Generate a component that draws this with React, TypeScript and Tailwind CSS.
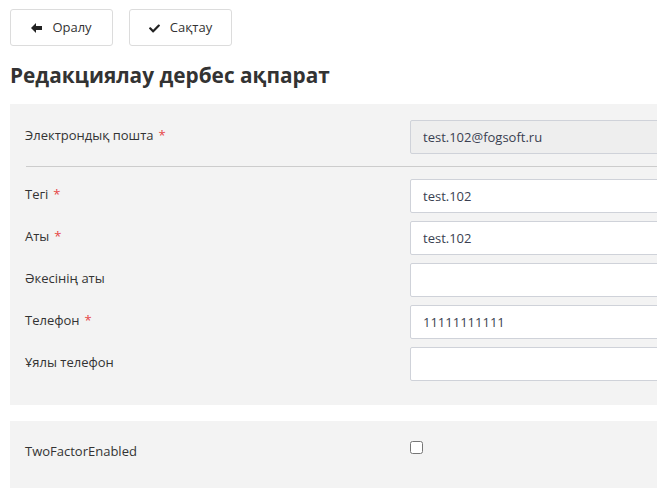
import { FaCheck } from "react-icons/fa";

const ArrowLeft = () => (
  <svg width="11" height="10" viewBox="0 0 11 10" className="shrink-0">
    <polygon points="0,5 5,0 5,10" fill="#222" />
    <rect x="4.5" y="3" width="6.5" height="4" fill="#222" />
  </svg>
);

const Req = () => <span className="ml-[5px] text-[#e64545]">*</span>;

type Field = { label: string; value: string; required?: boolean };

const fields: Field[] = [
  { label: "Тегі", value: "test.102", required: true },
  { label: "Аты", value: "test.102", required: true },
  { label: "Әкесінің аты", value: "" },
  { label: "Телефон", value: "11111111111", required: true },
  { label: "Ұялы телефон", value: "" },
];

export default function App() {
  return (
    <div className="w-[657px] h-[495px] overflow-hidden bg-white font-['Open_Sans',sans-serif] text-[13px] text-[#333]">
      <div className="w-[900px] pl-[10px]">
        {/* Toolbar */}
        <div className="flex gap-4 pt-[9px]">
          <button className="flex h-[37px] w-[103px] items-center justify-center gap-[10px] rounded-[3px] border border-[#dcdcdc] bg-white pt-px text-[13px] text-[#333]">
            <ArrowLeft />
            <span>Оралу</span>
          </button>
          <button className="flex h-[37px] w-[103px] items-center justify-center gap-[10px] rounded-[3px] border border-[#dcdcdc] bg-white pt-px text-[13px] text-[#333]">
            <FaCheck className="h-[11px] w-[11px] text-[#222]" />
            <span>Сақтау</span>
          </button>
        </div>

        <h1 className="mt-[17px] mb-[17px] text-[20.8px] font-bold leading-[24px] text-[#333]">
          Редакциялау дербес ақпарат
        </h1>

        {/* Main panel */}
        <div className="bg-[#f3f3f3] px-[15px] pt-[16px] pb-[24px]">
          <div className="grid grid-cols-[385px_1fr]">
            <label className="pt-[6px] leading-[18px]">
              Электрондық пошта
              <Req />
            </label>
            <input
              disabled
              value="test.102@fogsoft.ru"
              readOnly
              className="h-[34px] w-full rounded-[2px] border border-[#cfd2d9] bg-[#eeeeee] px-[12px] text-[13px] text-[#3a3f51] outline-none"
            />
          </div>

          <div className="mt-[12px] ml-[1px] h-px bg-[#cccccc]" />

          <div className="mt-[12px] flex flex-col gap-[8px]">
            {fields.map((f) => (
              <div key={f.label} className="grid grid-cols-[385px_1fr]">
                <label className="pt-[6px] leading-[18px]">
                  {f.label}
                  {f.required && <Req />}
                </label>
                <input
                  value={f.value}
                  readOnly
                  className="h-[34px] w-full rounded-[2px] border border-[#cfd2d9] bg-white px-[12px] text-[13px] text-[#3a3f51] outline-none"
                />
              </div>
            ))}
          </div>
        </div>

        {/* Two factor panel */}
        <div className="mt-[16px] h-[67px] bg-[#f3f3f3] px-[15px] pt-[20px]">
          <div className="grid grid-cols-[385px_1fr]">
            <label className="pt-[1px] leading-[18px]">TwoFactorEnabled</label>
            <div>
              <input type="checkbox" className="m-0 block h-[13px] w-[13px]" />
            </div>
          </div>
        </div>
      </div>
    </div>
  );
}
